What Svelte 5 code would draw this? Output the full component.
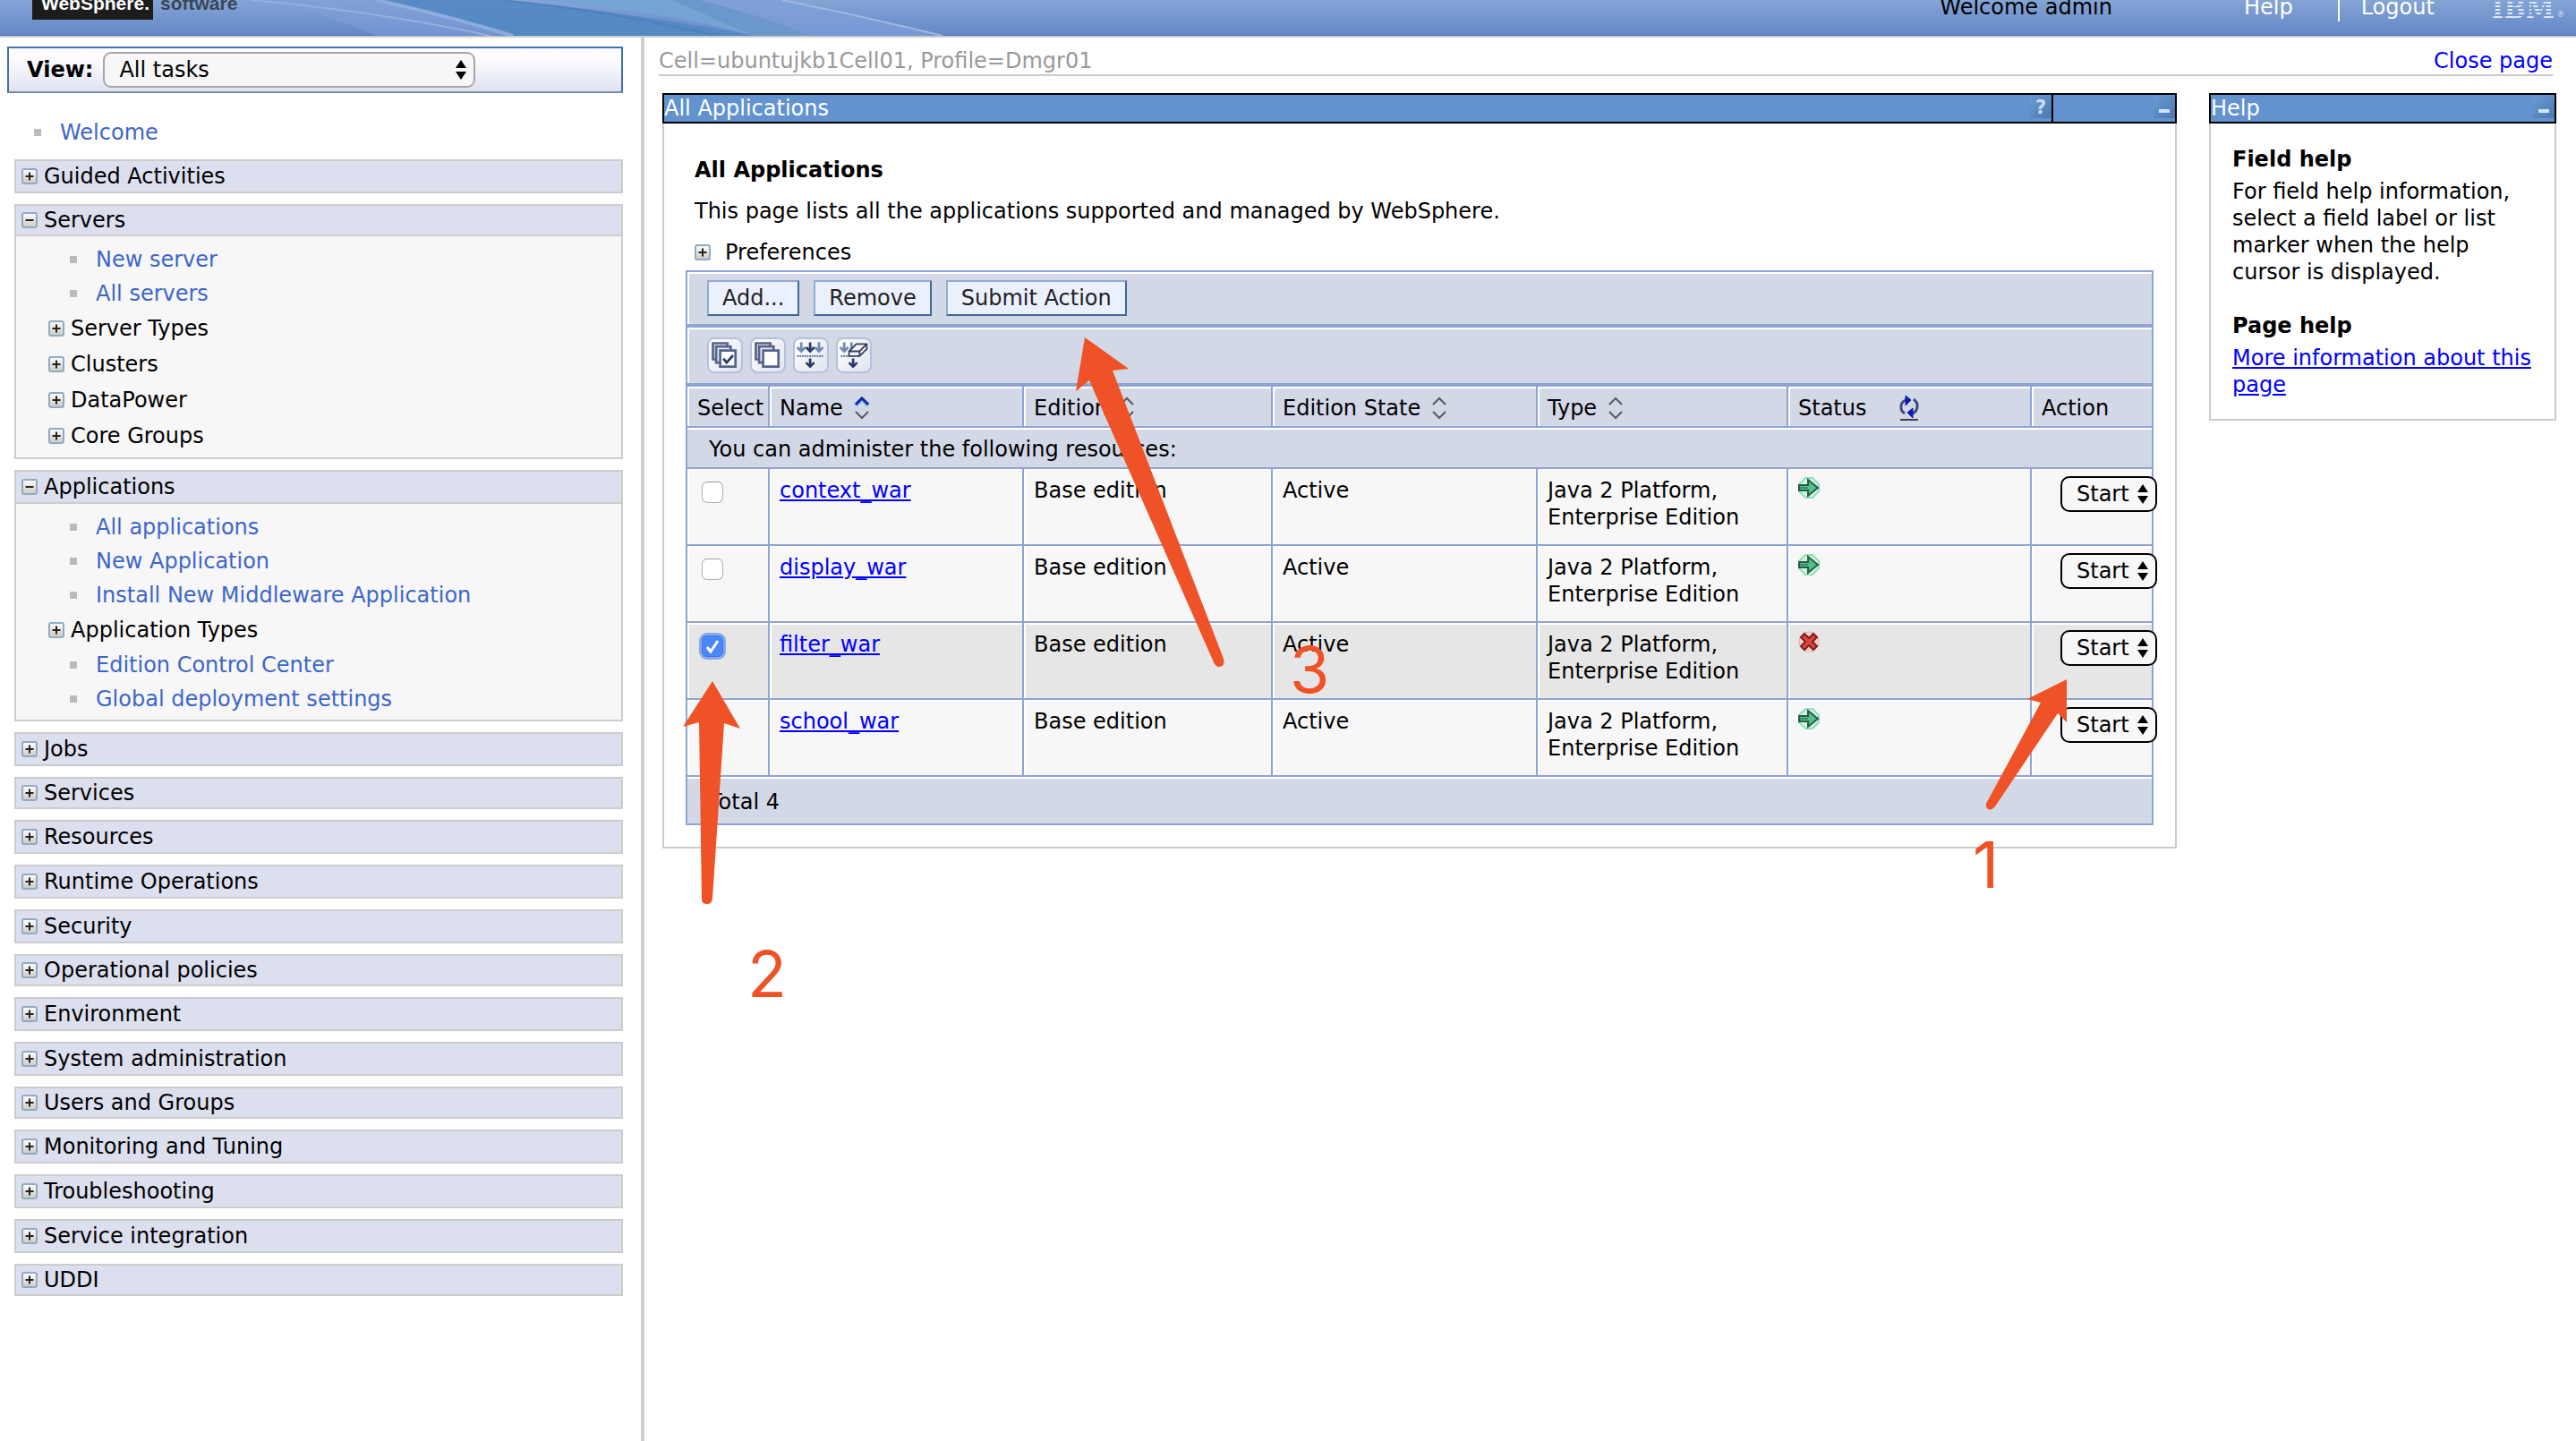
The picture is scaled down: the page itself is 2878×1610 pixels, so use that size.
<script lang="ts">
  type Item = { label: string; group?: boolean };
  type Section = { label: string; items?: Item[] };

  const sections: Section[] = [
    { label: 'Guided Activities' },
    {
      label: 'Servers',
      items: [
        { label: 'New server' },
        { label: 'All servers' },
        { label: 'Server Types', group: true },
        { label: 'Clusters', group: true },
        { label: 'DataPower', group: true },
        { label: 'Core Groups', group: true }
      ]
    },
    {
      label: 'Applications',
      items: [
        { label: 'All applications' },
        { label: 'New Application' },
        { label: 'Install New Middleware Application' },
        { label: 'Application Types', group: true },
        { label: 'Edition Control Center' },
        { label: 'Global deployment settings' }
      ]
    },
    { label: 'Jobs' },
    { label: 'Services' },
    { label: 'Resources' },
    { label: 'Runtime Operations' },
    { label: 'Security' },
    { label: 'Operational policies' },
    { label: 'Environment' },
    { label: 'System administration' },
    { label: 'Users and Groups' },
    { label: 'Monitoring and Tuning' },
    { label: 'Troubleshooting' },
    { label: 'Service integration' },
    { label: 'UDDI' }
  ];

  let apps = $state([
    { name: 'context_war', running: true, selected: false },
    { name: 'display_war', running: true, selected: false },
    { name: 'filter_war', running: false, selected: true },
    { name: 'school_war', running: true, selected: false }
  ]);

  const total = $derived(apps.length);

  function selectAll(value: boolean) {
    for (const app of apps) app.selected = value;
  }
</script>

{#snippet toggle(open: boolean)}
  <svg class="toggle" viewBox="0 0 18 20" aria-hidden="true">
    <defs>
      <linearGradient id="tg" x1="0" y1="0" x2="0" y2="1">
        <stop offset="0" stop-color="#fff" />
        <stop offset="1" stop-color="#cfcabd" />
      </linearGradient>
    </defs>
    <rect x="1" y="2" width="16" height="16" rx="2" fill="url(#tg)" stroke="#8fabc6" stroke-width="2" />
    <path d={open ? 'M4.500 10h9' : 'M4.500 10h9M9 5.500v9'} stroke="#222" stroke-width="2" />
  </svg>
{/snippet}

{#snippet sorter(active: boolean)}
  <svg class="sorter" viewBox="0 0 18 26" aria-hidden="true">
    {#if active}
      <path d="M2 10 9 3l7 7" fill="none" stroke="#7fd0e0" stroke-width="5" />
    {/if}
    <path d="M2 9 9 2l7 7" fill="none" stroke={active ? '#1c22a8' : '#5b5b5b'} stroke-width={active ? 3 : 2} />
    <path d="M2 17l7 7 7-7" fill="none" stroke="#5b5b5b" stroke-width="2" />
  </svg>
{/snippet}

<div class="page">
  <header class="banner">
    <svg class="swoosh" viewBox="0 0 820 40" aria-hidden="true">
      <path d="M41 0H181Q260 18 335 40H180Q120 12 41 0z" fill="#7f9fd8" opacity=".5" />
      <path d="M181 0H321Q440 10 602 40H335Q270 18 181 0z" fill="#5388c3" opacity=".9" />
      <path d="M356 0H511L602 40Q500 12 356 0z" fill="#73a4d4" />
      <path d="M511 0h31q60 16 123 40h-63z" fill="#6b98cb" />
      <path d="M542 0h92q90 18 179 40H665Q600 14 542 0z" fill="#7f9fd9" opacity=".7" />
      <path d="M41 0Q190 14 307 40" fill="none" stroke="#94b0e0" stroke-width="2" />
      <path d="M181 0Q262 18 333 40" fill="none" stroke="#93b3df" stroke-width="4" opacity=".8" />
      <path d="M634 0Q724 18 813 40" fill="none" stroke="#a0b8e3" stroke-width="2" />
      <path d="M321 0Q440 12 560 40" fill="none" stroke="#4177b8" stroke-width="2" opacity=".5" />
    </svg>
    <div class="brand"><strong>WebSphere.</strong><span>software</span></div>
    <div class="user">Welcome admin</div>
    <nav class="links">
      <a href="#help">Help</a>
      <a href="#logout">Logout</a>
    </nav>
    <div class="ibm"><b>IBM</b><small>®</small></div>
  </header>

  <div class="frames">
    <aside class="sidebar">
      <div class="view">
        <label for="view">View:</label>
        <select id="view" class="view-select">
          <option>All tasks</option>
        </select>
      </div>

      <div class="leaf welcome"><a href="#welcome">Welcome</a></div>

      <nav class="sections">
        {#each sections as section}
          <section class="section">
            <button class="bar" type="button" aria-expanded={!!section.items}>
              {@render toggle(!!section.items)}{section.label}
            </button>
            {#if section.items}
              <div class="items">
                {#each section.items as item}
                  {#if item.group}
                    <button class="group" type="button">{@render toggle(false)}{item.label}</button>
                  {:else}
                    <div class="leaf"><a href="#task">{item.label}</a></div>
                  {/if}
                {/each}
              </div>
            {/if}
          </section>
        {/each}
      </nav>
    </aside>

    <main class="content">
      <div class="crumb">
        <span>Cell=ubuntujkb1Cell01, Profile=Dmgr01</span>
        <a href="#close">Close page</a>
      </div>

      <div class="portlets">
        <section class="portlet">
          <div class="title">
            <span>All Applications</span>
            <div class="title-end">
              <button class="glyph" type="button" aria-label="Help for this page">?</button>
            </div>
            <div class="title-end wide">
              <button class="glyph minus" type="button" aria-label="Minimize"></button>
            </div>
          </div>

          <div class="portlet-body">
            <h1>All Applications</h1>
            <p class="intro">This page lists all the applications supported and managed by WebSphere.</p>
            <button class="prefs" type="button">{@render toggle(false)}Preferences</button>

            <div class="toolbar">
              <button class="action" type="button">Add...</button>
              <button class="action" type="button">Remove</button>
              <button class="action" type="button">Submit Action</button>
            </div>

            <div class="toolbar icons">
              <button class="tool" type="button" aria-label="Select all" onclick={() => selectAll(true)}>
                <svg viewBox="0 0 40 40">
                  <g fill="#e9edf5" stroke="#56648c" stroke-width="3">
                    <path d="M5 5h18v20H5z" />
                    <path d="M9 9h18v20H9z" />
                    <path d="M14 14h19v20H14z" fill="#fff" />
                  </g>
                  <path d="M18 24l4 5 8-9" fill="none" stroke="#2c3966" stroke-width="3" />
                </svg>
              </button>
              <button class="tool" type="button" aria-label="Deselect all" onclick={() => selectAll(false)}>
                <svg viewBox="0 0 40 40">
                  <g fill="#e9edf5" stroke="#56648c" stroke-width="3">
                    <path d="M5 5h18v20H5z" />
                    <path d="M9 9h18v20H9z" />
                    <path d="M14 14h19v20H14z" fill="#fff" />
                  </g>
                </svg>
              </button>
              <button class="tool" type="button" aria-label="Show filter">
                <svg viewBox="0 0 40 40" fill="none" stroke-width="2">
                  <path d="M8 4v11M3 10l5 5 5-5M30 4v11M25 10l5 5 5-5" stroke="#6f8cb0" stroke-width="3" />
                  <path d="M19 4v11M14 10l5 5 5-5M19 24v10M14 29l5 5 5-5" stroke="#2c3966" stroke-width="3" />
                  <path d="M3 21h33" stroke="#4d6292" stroke-dasharray="2 1" />
                </svg>
              </button>
              <button class="tool" type="button" aria-label="Clear filter">
                <svg viewBox="0 0 40 40" fill="none" stroke-width="2">
                  <path d="M8 4v11M3 10l5 5 5-5M17 4v8" stroke="#6f8cb0" stroke-width="3" />
                  <path d="M4 21h10" stroke="#4d6292" stroke-dasharray="2 1" />
                  <path d="M19 24v10M14 29l5 5 5-5" stroke="#2c3966" stroke-width="3" />
                  <path d="M14 15 23 6h13v6l-9 9H14zM14 15h13l9-9M27 15v6" fill="#f4f6fb" stroke="#333f60" />
                </svg>
              </button>
            </div>

            <table>
              <colgroup>
                <col class="c-select" />
                <col class="c-name" />
                <col class="c-edition" />
                <col class="c-state" />
                <col class="c-type" />
                <col class="c-status" />
                <col class="c-action" />
              </colgroup>
              <thead>
                <tr>
                  <th>Select</th>
                  <th><span class="sort">Name{@render sorter(true)}</span></th>
                  <th><span class="sort">Edition{@render sorter(false)}</span></th>
                  <th><span class="sort">Edition State{@render sorter(false)}</span></th>
                  <th><span class="sort">Type{@render sorter(false)}</span></th>
                  <th>
                    <span class="sort status-head">
                      Status
                      <svg class="refresh" viewBox="0 0 24 28" aria-hidden="true">
                        <path d="M7 20Q2 17 3 11 4 6 9 5M17 4q5 4 4 9-1 6-6 7" fill="none" stroke="#3d4a7c" stroke-width="3" />
                        <path d="M8 0l6 5-6 6zM16 14l-6 5 6 6z" fill="#1519b8" stroke="#1519b8" />
                        <path d="M2 27h20" stroke="#444" stroke-width="2" />
                      </svg>
                    </span>
                  </th>
                  <th>Action</th>
                </tr>
              </thead>
              <tbody>
                <tr class="note"><td colspan="7">You can administer the following resources:</td></tr>
                {#each apps as app}
                  <tr class:selected={app.selected}>
                    <td><input class="tick" type="checkbox" bind:checked={app.selected} aria-label="Select {app.name}" /></td>
                    <td><a class="link" href="#app">{app.name}</a></td>
                    <td>Base edition</td>
                    <td>Active</td>
                    <td>Java 2 Platform, Enterprise Edition</td>
                    <td>
                      {#if app.running}
                        <svg class="state" viewBox="0 0 24 24" role="img" aria-label="Started">
                          <path d="M8 1h8l7 7v8l-7 7H8l-7-7V8z" fill="#d3f5e2" stroke="#8fe0b8" stroke-width="2" />
                          <path d="M1 9h10V3l11 9-11 9v-6H1z" fill="#4fbf8c" stroke="#2b5a48" stroke-width="2" />
                          <path d="M2 12h9" stroke="#2b5a48" stroke-width="1" />
                        </svg>
                      {:else}
                        <svg class="state" viewBox="0 0 24 24" role="img" aria-label="Stopped">
                          <circle cx="12" cy="12" r="11" fill="#f6d0d0" stroke="#eeaaaa" />
                          <path d="M3 7l4-4 5 5 5-5 4 4-5 5 5 5-4 4-5-5-5 5-4-4 5-5z" fill="#e0423c" stroke="#7c2220" stroke-width="2" />
                        </svg>
                      {/if}
                    </td>
                    <td class="act">
                      <select class="start" aria-label="Action for {app.name}">
                        <option>Start</option>
                      </select>
                    </td>
                  </tr>
                {/each}
                <tr class="note total"><td colspan="7">Total {total}</td></tr>
              </tbody>
            </table>
          </div>
        </section>

        <section class="portlet help">
          <div class="title">
            <span>Help</span>
            <div class="title-end">
              <button class="glyph minus" type="button" aria-label="Minimize help"></button>
            </div>
          </div>
          <div class="help-body">
            <h2>Field help</h2>
            <p>For field help information, select a field label or list marker when the help cursor is displayed.</p>
            <h2>Page help</h2>
            <p><a class="link" href="#more">More information about this page</a></p>
          </div>
        </section>
      </div>
    </main>
  </div>

  <!-- numbered steps drawn over the console -->
  <svg class="marks" width="2400" height="1200" viewBox="0 0 2400 1200">
    <path d="M1212 377 1261 412 1243 414 1367 736Q1369 745 1362 745 1358 745 1356 740L1217 425 1202 437z" />
    <path d="M796 761 827 814 809 808 796 1004Q795 1010 790 1010 784 1010 784 1005L781 807 763 812z" />
    <path d="M2309 759V807L2299 797 2229 901Q2225 906 2221 904 2217 901 2220 896L2280 785 2265 781z" />
    <text x="2204" y="992">1</text>
    <text x="835" y="1114">2</text>
    <text x="1441" y="774">3</text>
  </svg>
</div>

<style>
  :global(body) {
    background: #fff;
  }

  .page {
    position: relative;
    min-height: 100vh;
    overflow: hidden;
    display: flex;
    flex-direction: column;
    font: 24px/30px Verdana, "DejaVu Sans", sans-serif;
    color: #000;
  }

  button,
  select {
    font: inherit;
    color: inherit;
  }

  button {
    background: none;
    border: 0;
    padding: 0;
    text-align: left;
  }

  /* banner: its top edge is scrolled out of view */
  .banner {
    position: relative;
    display: flex;
    align-items: flex-start;
    height: 60px;
    margin-top: -20px;
    border-bottom: 2px solid #ccc;
    background: linear-gradient(#8caed6 0%, #84a4d4 35%, #7798d0 60%, #668ac8 96%, #4f76be 100%);
  }

  .swoosh {
    position: absolute;
    left: 240px;
    bottom: 0;
    width: 820px;
    height: 40px;
  }

  .brand {
    position: relative;
    display: flex;
    gap: 8px;
    flex: 1;
    padding-left: 36px;
    font: bold 21px/24px "Liberation Sans", Arial, sans-serif;
  }

  .brand strong {
    padding: 12px 4px 6px 10px;
    background: #1c1c1c;
    color: #fff;
  }

  .brand span {
    padding-top: 12px;
    color: #3a4657;
  }

  .user {
    padding-top: 13px;
    margin-right: 147px;
  }

  .links {
    display: flex;
    margin-right: 64px;
  }

  .links a {
    padding-top: 13px;
    height: 31px;
    color: #fff;
    text-decoration: none;
  }

  .links a + a {
    margin-left: 50px;
    padding-left: 24px;
    border-left: 2px solid #fff;
  }

  .ibm {
    display: flex;
    align-items: flex-start;
    gap: 3px;
    margin-right: 13px;
    padding-top: 13px;
    color: #dbe4f4;
  }

  .ibm b {
    font: bold 29px/34px "DejaVu Serif", serif;
    background: repeating-linear-gradient(transparent 0 1px, #e2e9f6 1px 3px, transparent 3px 4px);
    background-clip: text;
    color: transparent;
  }

  .ibm small {
    padding-top: 16px;
    font-size: 8px;
    line-height: 16px;
  }

  .frames {
    display: flex;
    flex: 1;
  }

  /* left navigation */
  .sidebar {
    box-sizing: border-box;
    flex: none;
    width: 720px;
    padding: 10px 20px 40px 8px;
    border-right: 4px solid #d0d0d0;
  }

  .view {
    display: flex;
    align-items: center;
    gap: 11px;
    padding: 4px 20px;
    border: 2px solid #4470ae;
    border-bottom-color: #7b8ba6;
    background: linear-gradient(#fff, #fbfbfe 30%, #dfe3f1);
  }

  .view label {
    font-weight: bold;
  }

  select {
    appearance: none;
    box-sizing: border-box;
    height: 40px;
    background: #f7f7f7 url("data:image/svg+xml,%3Csvg xmlns='http://www.w3.org/2000/svg' width='12' height='24'%3E%3Cpath d='M0 10L6 1l6 9zM0 14l6 9 6-9z'/%3E%3C/svg%3E") no-repeat right 8px center;
  }

  .view-select {
    width: 416px;
    padding: 0 16px;
    border: 2px solid #a6a6a6;
    border-radius: 9px;
  }

  .leaf {
    display: flex;
    align-items: center;
    height: 38px;
    padding-left: 60px;
  }

  .leaf::before {
    content: "";
    width: 8px;
    height: 8px;
    margin-right: 21px;
    background: #bbb;
  }

  .leaf a {
    color: #3c66c8;
    text-decoration: none;
  }

  .welcome {
    margin: 25px 0 11px;
    padding-left: 30px;
  }

  .sections {
    display: flex;
    flex-direction: column;
    gap: 12px;
    padding-left: 8px;
  }

  .bar {
    display: flex;
    align-items: center;
    gap: 7px;
    box-sizing: border-box;
    width: 100%;
    height: 38px;
    padding: 0 6px 1px;
    border: 2px solid #ccc;
    background: #dcdfee;
  }

  .section:nth-child(2) .bar,
  .section:nth-child(5) .bar,
  .section:nth-child(9) .bar,
  .section:nth-child(12) .bar,
  .section:nth-child(16) .bar {
    height: 36px;
  }

  .items {
    padding: 7px 0 4px;
    border: 2px solid #ccc;
    border-top: 0;
    background: #f7f7f7;
  }

  .group {
    display: flex;
    align-items: center;
    gap: 7px;
    height: 40px;
    padding-left: 36px;
  }

  .toggle {
    flex: none;
    width: 18px;
    height: 20px;
  }

  /* work area */
  .content {
    flex: 1;
    min-width: 0;
    padding: 11px 22px 40px 16px;
  }

  .crumb {
    display: flex;
    justify-content: space-between;
    margin-right: 4px;
    border-bottom: 2px solid #ccc;
    color: #999;
  }

  .crumb a {
    color: #00f;
    text-decoration: none;
  }

  .portlets {
    display: flex;
    align-items: flex-start;
    gap: 36px;
    margin: 19px 0 0 4px;
  }

  .portlet {
    flex: 1;
    min-width: 0;
  }

  .help {
    flex: none;
    width: 388px;
  }

  .title {
    display: flex;
    border: 2px solid #000;
    background: #6293cf;
    color: #fff;
  }

  .title > span {
    flex: 1;
  }

  .title-end {
    display: flex;
    justify-content: flex-end;
    padding-top: 2px;
  }

  .title-end.wide {
    width: 136px;
    border-left: 2px solid #000;
  }

  .glyph {
    display: flex;
    align-items: center;
    justify-content: center;
    width: 24px;
    height: 24px;
    background: linear-gradient(135deg, #6b9ad3, #4a78b0);
    color: #c9def5;
    font-weight: bold;
    font-size: 21px;
  }

  .minus::before {
    content: "";
    width: 12px;
    height: 4px;
    margin-top: 8px;
    background: #d5e5f7;
  }

  .portlet-body {
    padding: 37px 24px 24px;
    border: 2px solid #ccc;
    border-top: 0;
  }

  h1,
  h2 {
    margin: 0;
    font-size: 24px;
    line-height: 30px;
  }

  h1,
  .intro,
  .prefs {
    padding-left: 10px;
  }

  .intro {
    margin: 16px 0;
  }

  .prefs {
    display: flex;
    align-items: center;
    gap: 16px;
    margin-bottom: 5px;
  }

  .toolbar {
    display: flex;
    align-items: center;
    gap: 16px;
    box-sizing: border-box;
    height: 62px;
    padding-left: 22px;
    border: 2px solid #8fa4d4;
    background: #d2d8e6;
    box-shadow: inset 2px 2px #fff;
  }

  .icons {
    height: 66px;
    gap: 8px;
  }

  .action {
    height: 40px;
    padding: 0 15px;
    border: 2px solid;
    border-color: #8fadce #3f6998 #3f6998 #8fadce;
    background: #ebf0ff;
    color: #222;
  }

  .tool {
    box-sizing: border-box;
    width: 40px;
    height: 40px;
    border: 2px solid #b4c2dc;
    border-radius: 8px;
    background: linear-gradient(135deg, #fff, #dfe4ee);
  }

  .tool svg {
    display: block;
    width: 36px;
    height: 36px;
  }

  table {
    width: 100%;
    table-layout: fixed;
    border-collapse: separate;
    border-spacing: 0;
    border-top: 2px solid #8fa4d4;
    border-left: 2px solid #8fa4d4;
  }

  .c-select { width: 92px; }
  .c-name { width: 284px; }
  .c-edition { width: 278px; }
  .c-state { width: 296px; }
  .c-type { width: 280px; }
  .c-status { width: 272px; }
  .c-action { width: 136px; }

  th,
  td {
    height: 60px;
    padding: 9px 10px 15px 11px;
    border-right: 2px solid #8fa4d4;
    border-bottom: 2px solid #8fa4d4;
    background: #f7f7f7;
    box-shadow: inset 2px 2px #fff;
    font-weight: normal;
    text-align: left;
    vertical-align: top;
  }

  th {
    height: 30px;
    padding: 9px 0 5px 11px;
    background: #d2d8e6;
  }

  .note td {
    height: 30px;
    padding: 9px 0 5px 24px;
    background: #d2d8e6;
    box-shadow: inset 0 2px #fff;
  }

  .total td {
    padding: 13px 0 9px 24px;
  }

  .selected td {
    background: #e6e6e6;
  }

  .sort {
    display: flex;
    align-items: center;
    gap: 12px;
  }

  .sorter {
    width: 18px;
    height: 26px;
  }

  .status-head {
    gap: 36px;
  }

  .refresh {
    width: 24px;
    height: 28px;
  }

  .tick {
    appearance: none;
    display: block;
    box-sizing: border-box;
    width: 24px;
    height: 24px;
    margin: 5px;
    border: 1px solid #b0b0b0;
    border-top-color: #999;
    border-radius: 6px;
    background: #fff;
  }

  .tick:checked {
    border-color: #3a78e8;
    background: #4a88f7 url("data:image/svg+xml,%3Csvg xmlns='http://www.w3.org/2000/svg' width='22' height='22'%3E%3Cpath d='M5 12l4 5 8-12' fill='none' stroke='white' stroke-width='3'/%3E%3C/svg%3E");
    box-shadow: 0 0 0 3px #86a9ea;
  }

  .link {
    color: #00f;
    text-decoration: underline;
  }

  .state {
    display: block;
    width: 24px;
    height: 24px;
  }

  .act {
    padding: 8px 0 0 32px;
  }

  .start {
    display: block;
    position: relative;
    width: 108px;
    padding: 0 0 0 16px;
    border: 2px solid #000;
    border-radius: 10px;
  }

  .help-body {
    padding: 25px 20px 23px 24px;
    border: 2px solid #ccc;
    border-top: 0;
  }

  .help-body p {
    margin: 6px 0 0;
  }

  .help-body p + h2 {
    margin-top: 30px;
  }

  .marks {
    position: absolute;
    top: 0;
    left: 0;
    fill: #ef5226;
    pointer-events: none;
  }

  .marks text {
    font: 72px Inter, sans-serif;
  }
</style>
